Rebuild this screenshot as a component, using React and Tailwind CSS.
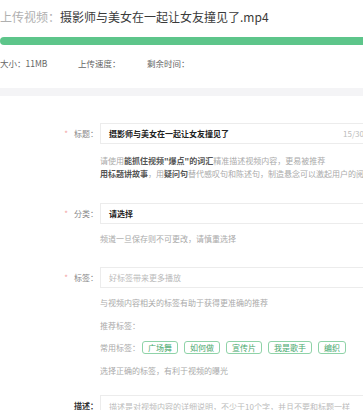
import React from 'react';

const chips = ['广场舞', '如何做', '宣传片', '我是歌手', '编织'];

function Label({ required, children, dark }) {
  return (
    <div className="w-[100px] shrink-0 h-[21px] flex items-center justify-end pr-[2px] text-[8px]">
      {required && <span className="text-[#f2a3a3] mr-[6px] text-[8px]">*</span>}
      <span className={dark ? 'text-[#333] font-bold' : 'text-[#888]'}>{children}</span>
    </div>
  );
}

function Field({ children, className = '' }) {
  return (
    <div
      className={`w-[275px] shrink-0 h-[21px] border border-[#ececec] flex items-center pl-[8px] pr-[10px] text-[8px] ${className}`}
    >
      {children}
    </div>
  );
}

function Hint({ children, className = '' }) {
  return (
    <div className={`pl-[100px] text-[8px] leading-[13px] text-[#aaa] whitespace-nowrap ${className}`}>
      {children}
    </div>
  );
}

export default function App() {
  return (
    <div className="w-[363px] h-[410px] overflow-hidden bg-white font-['Noto_Sans_CJK_SC','Liberation_Sans',sans-serif]">
      <div className="pt-[9px] text-[12px] leading-[16px] whitespace-nowrap">
        <span className="text-[#b0b0b0]">上传视频：</span>
        <span className="text-[#3a3a3a]">摄影师与美女在一起让女友撞见了.mp4</span>
      </div>
      <div className="mt-[12px] h-[8px] bg-[#5dc58a] rounded-l-full" />
      <div className="mt-[12px] flex text-[8.5px] leading-[12px] text-[#666] whitespace-nowrap">
        <span className="w-[78px]">大小：11MB</span>
        <span className="w-[69px]">上传速度：</span>
        <span>剩余时间：</span>
      </div>
      <div className="mt-[19px] h-[8px] bg-[#f4f4f6]" />

      <div className="mt-[27px] flex">
        <Label required>标题：</Label>
        <Field className="justify-between">
          <span className="font-bold text-[#222]">摄影师与美女在一起让女友撞见了</span>
          <span className="text-[#bbb]">15/30</span>
        </Field>
      </div>
      <Hint className="mt-[10px]">
        请使用<b className="text-[#555]">能抓住视频"爆点"的词汇</b>精准描述视频内容，更易被推荐
      </Hint>
      <Hint>
        <b className="text-[#555]">用标题讲故事</b>，用<b className="text-[#555]">疑问句</b>替代感叹句和陈述句，制造悬念可以激起用户的阅读兴趣
      </Hint>

      <div className="mt-[23px] flex">
        <Label required>分类：</Label>
        <Field>
          <span className="font-bold text-[#222]">请选择</span>
        </Field>
      </div>
      <Hint className="mt-[8px]">频道一旦保存则不可更改，请慎重选择</Hint>

      <div className="mt-[22px] flex">
        <Label required>标签：</Label>
        <Field>
          <span className="text-[#bbb]">好标签带来更多播放</span>
        </Field>
      </div>
      <Hint className="mt-[8px]">与视频内容相关的标签有助于获得更准确的推荐</Hint>
      <Hint className="mt-[10px]">推荐标签：</Hint>
      <div className="mt-[9px] pl-[100px] flex items-center h-[13px] text-[8px] text-[#aaa] whitespace-nowrap">
        <span className="w-[42px]">常用标签：</span>
        <div className="flex gap-[6px]">
          {chips.map((c) => (
            <span
              key={c}
              className="h-[13px] px-[5px] flex items-center border border-[#8fd3a8] rounded-[3px] text-[#46a86c]"
            >
              {c}
            </span>
          ))}
        </div>
      </div>
      <Hint className="mt-[10px]">选择正确的标签，有利于视频的曝光</Hint>

      <div className="mt-[18px] flex items-start">
        <Label dark>描述：</Label>
        <Field className="h-[40px] items-start pt-[5px]">
          <span className="text-[#bbb] whitespace-nowrap">描述是对视频内容的详细说明，不少于10个字，并且不要和标题一样</span>
        </Field>
      </div>
    </div>
  );
}
